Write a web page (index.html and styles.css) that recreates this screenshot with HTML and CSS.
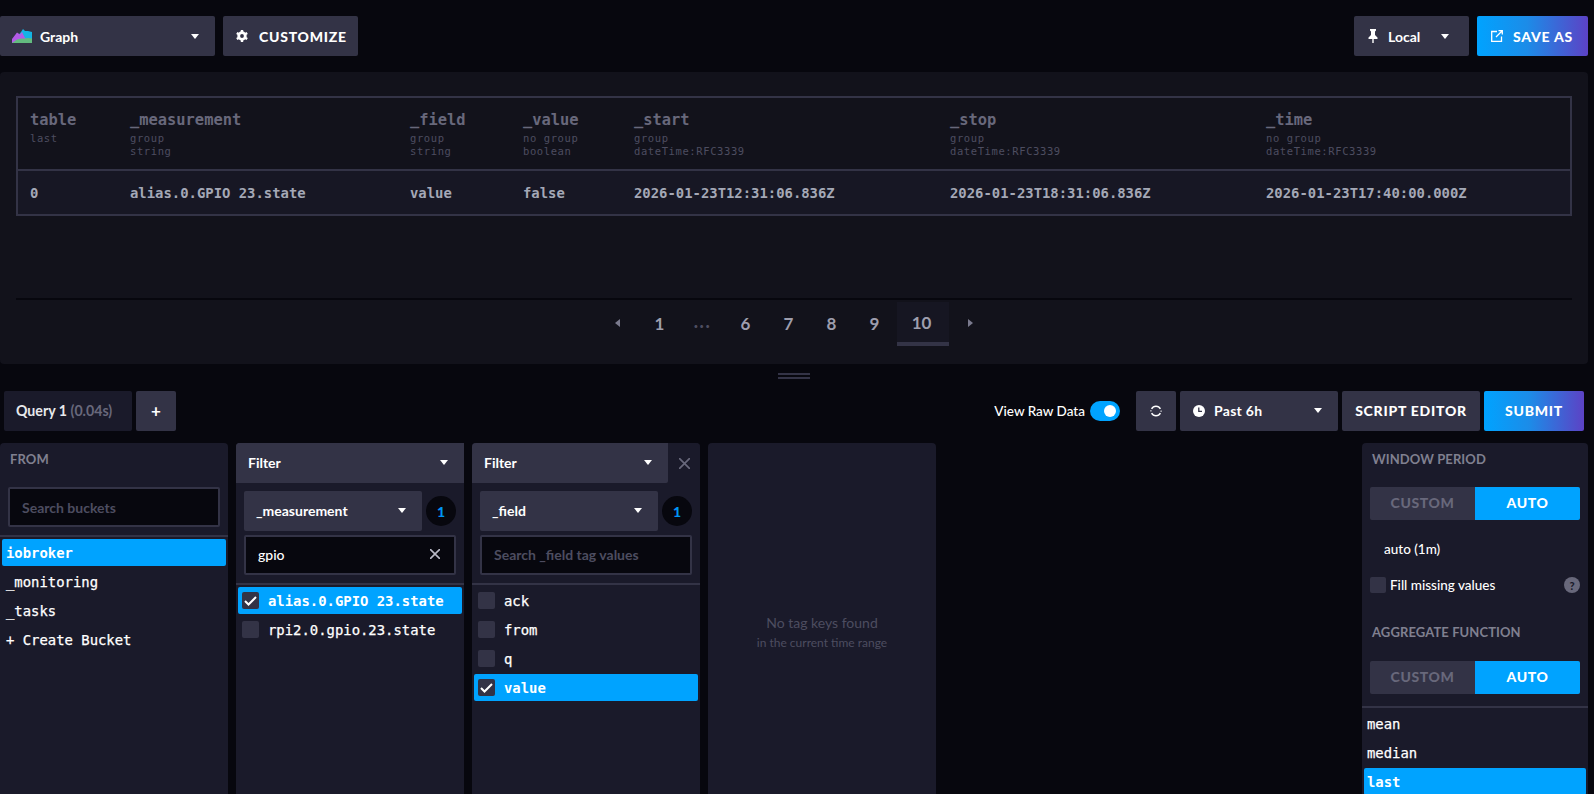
FILE: index.html
```html
<!DOCTYPE html>
<html lang="en">
<head>
<meta charset="utf-8">
<title>Data Explorer</title>
<link rel="stylesheet" href="styles.css">
</head>
<body>
<div class="page">
  <header class="topbar">
    <button class="btn btn-graph">
      <svg class="ico-graph" viewBox="0 0 20 14" width="20" height="14"><path d="M4 9 L9 3 L11 0 L13 2 L16 2 L20 3 V10 L12 10Z" fill="#14b4e4"/><path d="M0 10 L5 3.500 L8 5.500 L10 3 L13 9 L15 10 V14 H0Z" fill="#b35be6"/><path d="M0 14 L5 10.500 L9 9.500 L13 9.500 L16 9 L20 9.500 V14Z" fill="#63bb7f"/></svg>
      <span class="grow">Graph</span>
      <i class="caret"></i>
    </button>
    <button class="btn btn-caps btn-customize">
      <svg viewBox="0 0 12 12" width="12" height="12" fill="none" stroke="#fff"><circle cx="6" cy="6" r="3.300" stroke-width="2.800"/><path d="M6 0V2.500M6 9.500V12M.8 3L3 4.300M9 7.700L11.200 9M.8 9L3 7.700M9 4.300L11.200 3" stroke-width="2.400"/></svg>
      CUSTOMIZE
    </button>
    <span class="grow"></span>
    <button class="btn btn-local">
      <svg viewBox="0 0 10 14" width="10" height="14"><path d="M2 0h6v1.500L7 2.500V6l2.500 2.500V10H5.700v4h-1.400v-4H.5V8.500L3 6V2.500L2 1.500z" fill="#fff"/></svg>
      <span class="grow">Local</span>
      <i class="caret"></i>
    </button>
    <button class="btn btn-caps btn-primary btn-save">
      <svg viewBox="0 0 12 12" width="12" height="12" fill="none" stroke="#fff" stroke-width="1.300"><path d="M6 1.500H.7v9.800h9.800V6.500M5 7l6-6M7.500.7h3.800v3.800"/></svg>
      SAVE AS
    </button>
  </header>

  <section class="results">
    <table class="grid">
      <colgroup><col class="c-a"><col class="c-b"><col class="c-c"><col class="c-c2"><col class="c-d"><col class="c-d"><col class="c-d"></colgroup>
      <thead>
        <tr>
          <th><b>table</b><small>last</small></th>
          <th><b>_measurement</b><small>group</small><small>string</small></th>
          <th><b>_field</b><small>group</small><small>string</small></th>
          <th><b>_value</b><small>no group</small><small>boolean</small></th>
          <th><b>_start</b><small>group</small><small>dateTime:RFC3339</small></th>
          <th><b>_stop</b><small>group</small><small>dateTime:RFC3339</small></th>
          <th><b>_time</b><small>no group</small><small>dateTime:RFC3339</small></th>
        </tr>
      </thead>
      <tbody>
        <tr>
          <td>0</td>
          <td>alias.0.GPIO 23.state</td>
          <td>value</td>
          <td>false</td>
          <td>2026-01-23T12:31:06.836Z</td>
          <td>2026-01-23T18:31:06.836Z</td>
          <td>2026-01-23T17:40:00.000Z</td>
        </tr>
      </tbody>
    </table>
    <nav class="pager">
      <span class="pg pg-arrow"><i class="tri-l"></i></span>
      <span class="pg">1</span>
      <span class="pg pg-dots">...</span>
      <span class="pg">6</span>
      <span class="pg">7</span>
      <span class="pg">8</span>
      <span class="pg">9</span>
      <span class="pg pg-on">10</span>
      <span class="pg pg-arrow"><i class="tri-r"></i></span>
    </nav>
  </section>

  <div class="resizer"><span></span></div>

  <div class="querybar">
    <div class="qtab">Query 1 <em>(0.04s)</em></div>
    <button class="btn btn-add">+</button>
    <span class="grow"></span>
    <span class="raw">View Raw Data</span>
    <span class="toggle"><i></i></span>
    <button class="btn btn-refresh">
      <svg viewBox="0 0 12 12" width="12" height="12" fill="none" stroke="#fff" stroke-width="1.500"><path d="M1.600 3.800A5 5 0 0 1 10.400 3.800M10.400 8.200A5 5 0 0 1 1.600 8.200"/><path d="M.9 6.500A5 5 0 0 1 1 5M11.100 5.500A5 5 0 0 1 11 7" stroke-width="1"/></svg>
    </button>
    <button class="btn btn-range">
      <svg viewBox="0 0 12 12" width="12" height="12"><circle cx="6" cy="6" r="6" fill="#fff"/><path d="M5.800 2.500V6.300H9" fill="none" stroke="#333346" stroke-width="1.300"/></svg>
      <span class="grow range-label">Past 6h</span>
      <i class="caret"></i>
    </button>
    <button class="btn btn-caps btn-script">SCRIPT EDITOR</button>
    <button class="btn btn-caps btn-primary btn-submit">SUBMIT</button>
  </div>

  <main class="builder">
    <section class="card">
      <h4 class="card-title">FROM</h4>
      <div class="pad-search"><div class="field ph field-search">Search buckets</div></div>
      <ul class="list">
        <li class="sel">iobroker</li>
        <li>_monitoring</li>
        <li>_tasks</li>
        <li>+ Create Bucket</li>
      </ul>
    </section>

    <section class="card">
      <div class="filter-head"><div class="fh-btn"><span class="grow">Filter</span><i class="caret"></i></div></div>
      <div class="tag-row">
        <div class="tag-dd"><span class="grow">_measurement</span><i class="caret"></i></div>
        <span class="badge">1</span>
      </div>
      <div class="field field-tag">
        <span class="grow">gpio</span>
        <svg viewBox="0 0 10 10" width="10" height="10" stroke="#b9b9c6" stroke-width="1.600"><path d="M0 0L10 10M10 0L0 10"/></svg>
      </div>
      <ul class="list list-check">
        <li class="sel"><span class="cb cb-on"><svg viewBox="0 0 17 17" width="17" height="17" fill="none" stroke="#fff" stroke-width="2"><path d="M3 9l3.500 3.500L14 5"/></svg></span>alias.0.GPIO 23.state</li>
        <li><span class="cb"></span>rpi2.0.gpio.23.state</li>
      </ul>
    </section>

    <section class="card card-closable">
      <div class="filter-head">
        <div class="fh-btn fh-short"><span class="grow">Filter</span><i class="caret"></i></div>
        <svg class="fh-x" viewBox="0 0 11 11" width="11" height="11" stroke="#68687b" stroke-width="1.700"><path d="M0 0L11 11M11 0L0 11"/></svg>
      </div>
      <div class="tag-row">
        <div class="tag-dd"><span class="grow">_field</span><i class="caret"></i></div>
        <span class="badge">1</span>
      </div>
      <div class="field field-tag ph">Search _field tag values</div>
      <ul class="list list-check">
        <li><span class="cb"></span>ack</li>
        <li><span class="cb"></span>from</li>
        <li><span class="cb"></span>q</li>
        <li class="sel"><span class="cb cb-on"><svg viewBox="0 0 17 17" width="17" height="17" fill="none" stroke="#fff" stroke-width="2"><path d="M3 9l3.500 3.500L14 5"/></svg></span>value</li>
      </ul>
    </section>

    <section class="card card-empty">
      <p class="empty-main">No tag keys found</p>
      <p class="empty-sub">in the current time range</p>
    </section>

    <span class="grow"></span>

    <section class="card card-side">
      <h4 class="card-title">WINDOW PERIOD</h4>
      <div class="seg"><span>CUSTOM</span><span class="seg-on">AUTO</span></div>
      <p class="auto-val">auto (1m)</p>
      <div class="fill-row">
        <span class="cb"></span>
        <span class="grow">Fill missing values</span>
        <span class="help">?</span>
      </div>
      <h4 class="card-title title-agg">AGGREGATE FUNCTION</h4>
      <div class="seg"><span>CUSTOM</span><span class="seg-on">AUTO</span></div>
      <ul class="list list-fn">
        <li>mean</li>
        <li>median</li>
        <li class="sel">last</li>
      </ul>
    </section>
  </main>
</div>
</body>
</html>
```
FILE: styles.css
```css
* { box-sizing: border-box; }
html, body { margin: 0; height: 100%; }
body {
  background: #07070e;
  color: #fff;
  font-family: "Lato", "Open Sans", sans-serif;
  overflow: hidden;
}
button { font-family: inherit; border: 0; cursor: pointer; }
ul { list-style: none; margin: 0; padding: 0; }
p, h4 { margin: 0; }
.grow { flex: 1 1 auto; min-width: 0; text-align: left; }

.page { height: 794px; width: 1594px; padding-top: 16px; overflow: hidden; display: flex; flex-direction: column; }

.btn {
  height: 40px;
  background: #333346;
  color: #fff;
  border-radius: 2px;
  font-size: 14px;
  font-weight: 700;
  display: flex;
  align-items: center;
  padding: 0;
  flex: none;
}
.btn-caps { letter-spacing: .75px; font-size: 14px; font-weight: 900; }
.btn-primary { background: linear-gradient(90deg, #00a3ff 0%, #1c8ce8 45%, #5c42c5 100%); }

.topbar { display: flex; gap: 8px; padding-right: 6px; height: 40px; flex: none; }
.btn-graph { width: 215px; padding: 0 16px 0 12px; gap: 8px; }
.btn-customize { width: 135px; padding-left: 13px; gap: 11px; }
.btn-local { width: 115px; padding: 0 20px 0 14px; gap: 10px; }
.btn-save { width: 111px; padding-left: 14px; gap: 10px; }

.caret { display: block; width: 0; height: 0; border: 4.500px solid transparent; border-top: 5px solid #fff; border-bottom: 0; flex: none; }

.results {
  margin: 16px 6px 0 0;
  height: 292px;
  background: #12121b;
  border-radius: 4px;
  padding: 24px 16px 0;
  flex: none;
  display: flex;
  flex-direction: column;
}
.grid {
  width: 1556px;
  border: 2px solid #333346;
  border-collapse: separate;
  border-spacing: 0;
  table-layout: fixed;
  font-family: "DejaVu Sans Mono", "Liberation Mono", monospace;
  flex: none;
}
.c-a { width: 100px; } .c-b { width: 280px; } .c-c { width: 113px; } .c-c2 { width: 111px; } .c-d { width: 316px; }
.grid th {
  height: 73px;
  padding: 13px 12px 0;
  text-align: left;
  vertical-align: top;
  font-weight: 400;
  border-bottom: 2px solid #333346;
}
.grid th b { display: block; font-size: 15.400px; line-height: 18px; color: #68687b; font-weight: 700; margin-bottom: 3px; }
.grid th small { display: block; font-size: 10.500px; line-height: 13px; color: #4d4d60; letter-spacing: .6px; }
.grid td {
  height: 43px;
  padding: 0 12px;
  font-size: 13.900px;
  font-weight: 700;
  color: #a4a8b6;
  background: #171724;
  white-space: nowrap;
}

.pager {
  margin-top: 82px;
  border-top: 2px solid #07070e;
  padding-top: 2px;
  display: flex;
  justify-content: center;
}
.pg {
  width: 43px;
  height: 44px;
  display: flex;
  align-items: center;
  justify-content: center;
  padding: 0 2px 2px 0;
  color: #9e9ead;
  font-size: 17px;
  font-weight: 700;
}
.pg-arrow { padding-right: 0; }
.pg-dots { color: #4d4d60; font-size: 18px; font-weight: 900; letter-spacing: 1.500px; padding-bottom: 6px; }
.pg-on { width: 52px; background: #161622; border-bottom: 4px solid #333346; padding: 0 3px 0 0; }
.tri-l, .tri-r { display: block; width: 0; height: 0; border: 4px solid transparent; }
.tri-l { border-right: 5px solid #7a7a8e; border-left: 0; }
.tri-r { border-left: 5px solid #7a7a8e; border-right: 0; }

.resizer { height: 27px; flex: none; display: flex; justify-content: center; padding: 9px 6px 0 0; }
.resizer span { display: block; width: 32px; height: 6px; border-top: 2px solid #333346; border-bottom: 2px solid #333346; }

.querybar { display: flex; align-items: center; height: 40px; flex: none; padding: 0 10px 0 4px; gap: 4px; }
.querybar .btn { padding-bottom: 1px; }
.qtab { width: 128px; height: 40px; background: #1a1a2a; border-radius: 2px; font-size: 14.200px; font-weight: 700; color: #e7e8eb; line-height: 40px; padding-left: 12px; }
.qtab em { font-style: normal; color: #68687b; }
.btn-add { width: 40px; justify-content: center; font-size: 17px; }
.raw { font-size: 13.500px; font-weight: 500; color: #fff; margin-right: 1px; }
.toggle { width: 30px; height: 20px; background: #00a3ff; border-radius: 10px; margin-right: 12px; display: flex; align-items: center; justify-content: flex-end; padding-right: 4px; }
.toggle i { display: block; width: 12px; height: 12px; border-radius: 50%; background: #fff; }
.btn-refresh { width: 40px; justify-content: center; }
.btn-range { width: 158px; padding: 0 16px 0 13px; gap: 9px; }
.range-label { letter-spacing: .3px; }
.btn-script { width: 138px; justify-content: center; }
.btn-submit { width: 100px; justify-content: center; }

.builder { display: flex; gap: 8px; margin-top: 12px; height: 351px; padding-right: 6px; flex: none; overflow: hidden; }
.card { width: 228px; height: 420px; background: #1a1a2a; border-radius: 4px 4px 0 0; flex: none; position: relative; }
.card-title { font-size: 13px; font-weight: 700; color: #808090; padding: 7px 10px 0; line-height: 18px; height: 32px; letter-spacing: .1px; }
.pad-search { padding: 12px 8px 0; }
.field {
  height: 40px;
  background: #07070e;
  border: 2px solid #333346;
  border-radius: 2px;
  font-size: 14px;
  font-weight: 500;
  display: flex;
  align-items: center;
  padding: 0 14px 2px 12px;
  color: #fff;
}
.field.ph { color: #4d4d60; font-weight: 700; }
.field-search { padding-bottom: 0; }
.pad-search + .list { margin-top: 8px; }
.list { border-top: 2px solid #333346; padding: 2px 2px 0; font-family: "DejaVu Sans Mono", "Liberation Mono", monospace; font-size: 13.900px; }
.list li { height: 27px; margin-bottom: 2px; display: flex; align-items: center; padding-left: 4px; border-radius: 2px; color: #fff; white-space: nowrap; -webkit-text-stroke: .25px #fff; }
.list li.sel { background: #00a3ff; font-weight: 700; -webkit-text-stroke: 0; }
.cb { width: 17px; height: 17px; background: #333346; border-radius: 2px; flex: none; display: block; }
.cb svg { display: block; }
.list-check { margin-top: 8px; }
.list-check li { gap: 9px; }

.filter-head { height: 40px; background: #333346; border-radius: 4px 4px 0 0; }
.fh-btn { height: 40px; display: flex; align-items: center; padding: 0 16px 2px 12px; font-size: 14px; font-weight: 700; background: #333346; border-radius: 4px 0 0 0; }
.card-closable .filter-head { background: #1a1a2a; display: flex; align-items: center; }
.fh-short { width: 196px; flex: none; border-radius: 4px 0 2px 0; }
.fh-x { margin-left: 11px; }
.tag-row { display: flex; align-items: center; gap: 4px; padding: 8px 8px 4px; }
.tag-dd { flex: 1; height: 40px; background: #333346; border-radius: 2px; display: flex; align-items: center; padding: 0 16px 2px 12px; font-size: 14px; font-weight: 700; }
.badge { width: 30px; height: 30px; border-radius: 50%; background: #07070e; color: #0095f6; font-size: 14px; font-weight: 900; display: flex; align-items: center; justify-content: center; flex: none; }
.field-tag { margin: 0 8px; }

.card-empty { display: flex; flex-direction: column; align-items: center; padding-top: 170px; }
.empty-main { font-size: 14px; line-height: 20px; color: #4d4d60; }
.empty-sub { font-size: 12px; line-height: 20px; color: #4d4d60; }

.card-side { width: 226px; }
.seg { margin: 12px 8px 0; height: 33px; display: flex; font-size: 14px; font-weight: 900; letter-spacing: .6px; border-radius: 2px; overflow: hidden; background: #333346; color: #68687b; }
.seg span { flex: 1; display: flex; align-items: center; justify-content: center; padding-bottom: 2px; }
.seg .seg-on { background: #00a3ff; color: #fff; }
.auto-val { font-size: 13.500px; line-height: 20px; padding: 19px 0 0 22px; height: 39px; font-weight: 500; }
.fill-row { display: flex; align-items: center; gap: 4px; padding: 0 8px; margin-top: 18px; font-size: 13.500px; font-weight: 500; height: 16px; }
.fill-row .cb { width: 16px; height: 16px; }
.help { width: 16px; height: 16px; border-radius: 50%; background: #68687b; color: #1a1a2a; font-size: 11px; font-weight: 900; display: flex; align-items: center; justify-content: center; flex: none; }
.title-agg { margin-top: 30px; height: 17px; padding-top: 0; }
.title-agg + .seg { margin-top: 21px; }
.list-fn { margin-top: 12px; }
.list-fn li { padding-left: 3px; }
```
